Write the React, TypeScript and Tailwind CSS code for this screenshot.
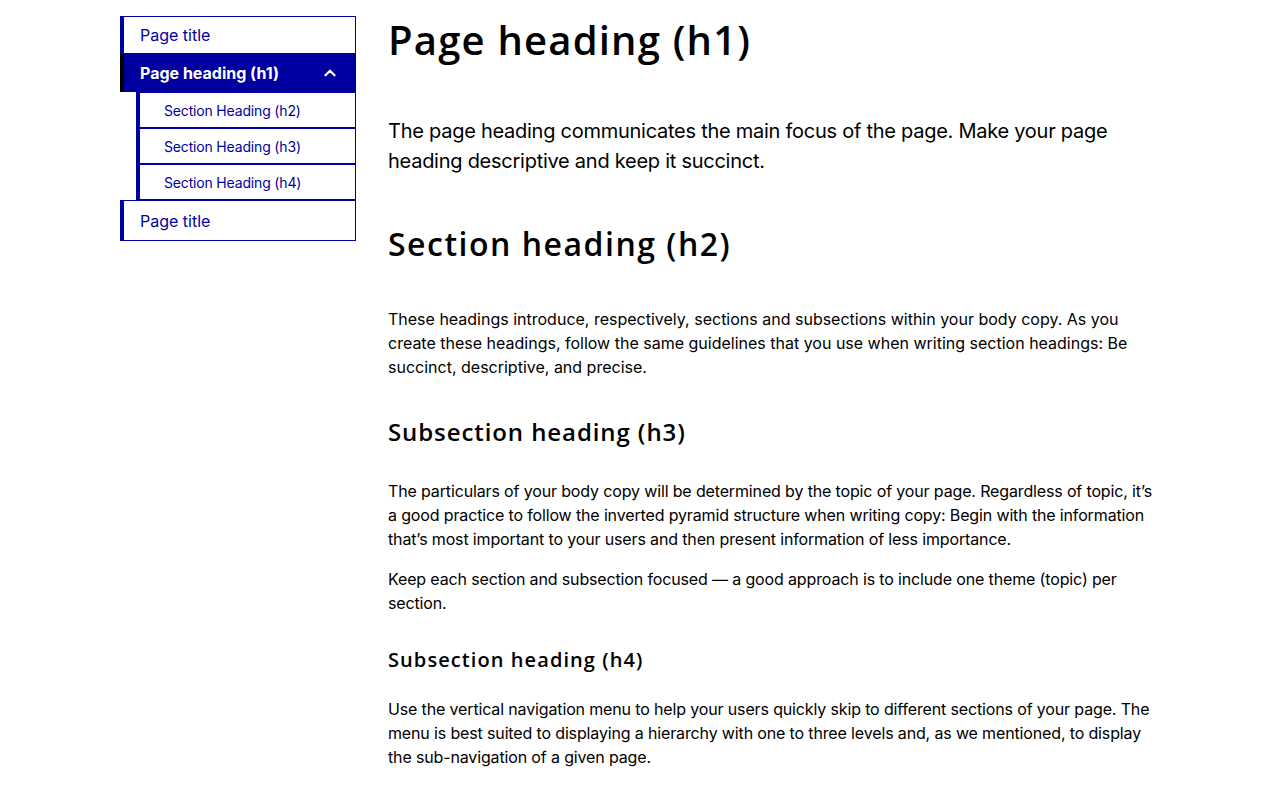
import React from "react";
import { ChevronUp } from "lucide-react";

const body = { fontFamily: "Inter, 'Noto Sans', sans-serif" };
const head = { fontFamily: "'Open Sans', 'Noto Sans', sans-serif" };

export default function App() {
  return (
    <div className="bg-white min-h-[786px] text-black" style={body}>
      <div className="flex gap-8 pl-[120px] pt-4 w-[1160px]">
        <nav className="w-[236px] shrink-0">
          <div className="h-[38px] border border-l-4 border-[#0000a0] pl-4 flex items-center text-[16px] text-[#0000a0]">
            Page title
          </div>
          <div className="h-[38px] bg-[#0000a0] border-l-4 border-black pl-4 pr-[17px] flex items-center justify-between text-[16px] font-bold text-white">
            <span>Page heading (h1)</span>
            <ChevronUp size={18} strokeWidth={3} />
          </div>
          <div className="ml-4 border-l-4 border-[#0000a0]">
            {["Section Heading (h2)", "Section Heading (h3)", "Section Heading (h4)"].map((t) => (
              <div key={t} className="h-9 border-y border-r border-[#0000a0] pl-6 flex items-center text-[14px] tracking-[-0.012em] text-[#0000a0]">
                {t}
              </div>
            ))}
          </div>
          <div className="h-[41px] border border-l-4 border-[#0000a0] pl-4 flex items-center text-[16px] text-[#0000a0]">
            Page title
          </div>
        </nav>
        <main className="flex-1 min-w-0">
          <h1 className="text-[40px] leading-[48px] font-semibold tracking-[0.03em]" style={head}>Page heading (h1)</h1>
          <p className="mt-[52px] text-[20px] leading-[30px] tracking-[-0.013em]">
            The page heading communicates the main focus of the page. Make your page heading descriptive and keep it succinct.
          </p>
          <h2 className="mt-[48px] text-[32px] leading-[40px] font-semibold tracking-[0.047em]" style={head}>Section heading (h2)</h2>
          <p className="mt-[43px] text-[16px] leading-[24px]">
            These headings introduce, respectively, sections and subsections within your body copy. As you create these headings, follow the same guidelines that you use when writing section headings: Be succinct, descriptive, and precise.
          </p>
          <h3 className="mt-[37px] text-[24px] leading-[32px] font-semibold tracking-[0.038em]" style={head}>Subsection heading (h3)</h3>
          <p className="mt-[31px] text-[16px] leading-[24px] tracking-[-0.009em]">
            The particulars of your body copy will be determined by the topic of your page. Regardless of topic, it’s a good practice to follow the inverted pyramid structure when writing copy: Begin with the information that’s most important to your users and then present information of less importance.
          </p>
          <p className="mt-4 text-[16px] leading-[24px] tracking-[-0.009em]">
            Keep each section and subsection focused — a good approach is to include one theme (topic) per section.
          </p>
          <h4 className="mt-[31px] text-[20px] leading-[28px] font-semibold tracking-[0.054em]" style={head}>Subsection heading (h4)</h4>
          <p className="mt-[23px] text-[16px] leading-[24px] tracking-[-0.009em]">
            Use the vertical navigation menu to help your users quickly skip to different sections of your page. The menu is best suited to displaying a hierarchy with one to three levels and, as we mentioned, to display the sub-navigation of a given page.
          </p>
        </main>
      </div>
    </div>
  );
}
